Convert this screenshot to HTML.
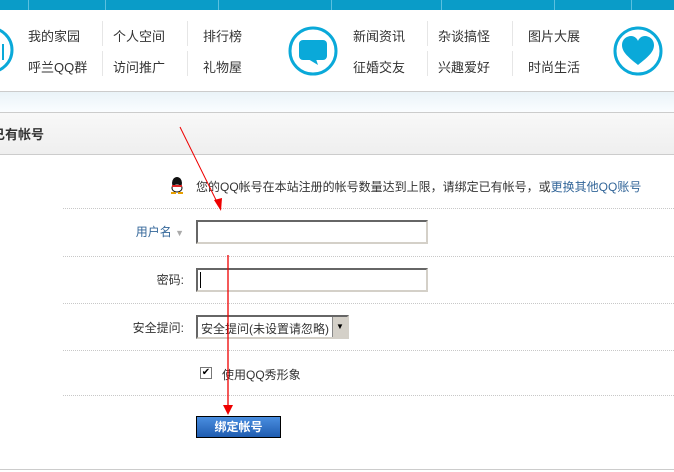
<!DOCTYPE html>
<html><head><meta charset="utf-8"><style>
body{margin:0;width:674px;height:472px;overflow:hidden;background:#fff;font-family:"Liberation Sans","Noto Sans CJK SC",sans-serif;font-size:12px;color:#333;position:relative}
.a{position:absolute}
.top{left:0;top:0;width:674px;height:10px;background:#0a9cc8}
.sep{top:0;width:1px;height:10px;background:#5cc0df}
.nav{font-size:13px;color:#333}
.vl{width:1px;height:25px;background:#e6e6e6}
.dot{left:63px;width:611px;border-top:1px dotted #c8c8c8;height:0}
.lbl{width:120px;text-align:right;left:64px}
.inp{left:196px;width:228px;height:20px;border:2px solid;border-color:#666 #d4d0c8 #d4d0c8 #666;background:#fff}
</style></head><body>
<div class="a top"></div>
<div class="a sep" style="left:28px"></div><div class="a sep" style="left:105px"></div><div class="a sep" style="left:218px"></div><div class="a sep" style="left:331px"></div><div class="a sep" style="left:441px"></div><div class="a sep" style="left:554px"></div><div class="a sep" style="left:631px"></div>
<svg class="a" style="left:0;top:10px" width="674" height="82">
<circle cx="-10" cy="40" r="22" fill="none" stroke="#0aa9d9" stroke-width="3"/>
<path d="M3 34 L3 50" stroke="#0aa9d9" stroke-width="2"/>
<circle cx="313" cy="41" r="23" fill="none" stroke="#0aa9d9" stroke-width="3"/>
<rect x="299" y="30" width="28" height="20" rx="4" fill="#0aa9d9"/><path d="M308 49 L318 55 L316 49Z" fill="#0aa9d9"/>
<circle cx="638" cy="41" r="23" fill="none" stroke="#0aa9d9" stroke-width="3"/>
<path d="M638 55 C628 47 622 42 622 35 C622 29 627 26 631 26 C634 26 637 28 638 31 C639 28 642 26 645 26 C649 26 654 29 654 35 C654 42 648 47 638 55Z" fill="#0aa9d9"/>
</svg>
<div class="a nav" style="left:28px;top:26px">我的家园</div><div class="a nav" style="left:28px;top:57px">呼兰QQ群</div>
<div class="a vl" style="left:102px;top:21px"></div><div class="a vl" style="left:102px;top:51px"></div>
<div class="a nav" style="left:113px;top:26px">个人空间</div><div class="a nav" style="left:113px;top:57px">访问推广</div>
<div class="a vl" style="left:187px;top:21px"></div><div class="a vl" style="left:187px;top:51px"></div>
<div class="a nav" style="left:203px;top:26px">排行榜</div><div class="a nav" style="left:203px;top:57px">礼物屋</div>
<div class="a nav" style="left:353px;top:26px">新闻资讯</div><div class="a nav" style="left:353px;top:57px">征婚交友</div>
<div class="a vl" style="left:427px;top:21px"></div><div class="a vl" style="left:427px;top:51px"></div>
<div class="a nav" style="left:438px;top:26px">杂谈搞怪</div><div class="a nav" style="left:438px;top:57px">兴趣爱好</div>
<div class="a vl" style="left:512px;top:21px"></div><div class="a vl" style="left:512px;top:51px"></div>
<div class="a nav" style="left:528px;top:26px">图片大展</div><div class="a nav" style="left:528px;top:57px">时尚生活</div>
<div class="a" style="left:0;top:91px;width:674px;height:1px;background:#ccc"></div>
<div class="a" style="left:0;top:92px;width:674px;height:20px;background:linear-gradient(#eaf3f8,#fafdff)"></div>
<div class="a" style="left:0;top:112px;width:674px;height:41px;background:linear-gradient(#f8f8f8,#efefef);border-top:1px solid #ccc;border-bottom:1px solid #ccc"></div>
<div class="a" style="left:-8px;top:124px;font-size:13px;font-weight:bold;color:#333">已有帐号</div>
<svg class="a" style="left:168px;top:176px" width="18" height="18"><ellipse cx="9" cy="7" rx="5" ry="6" fill="#111"/><ellipse cx="9" cy="12" rx="5" ry="4" fill="#fff" stroke="#111"/><rect x="4" y="9" width="10" height="2" fill="#d22"/><path d="M3 17h5M10 17h5" stroke="#e8a000" stroke-width="2"/></svg>
<div class="a" style="left:196px;top:178px">您的QQ帐号在本站注册的帐号数量达到上限，请绑定已有帐号，或<span style="color:#336699">更换其他QQ账号</span></div>
<div class="a dot" style="top:208px"></div><div class="a dot" style="top:256px"></div><div class="a dot" style="top:303px"></div><div class="a dot" style="top:350px"></div><div class="a dot" style="top:395px"></div>
<div class="a lbl" style="top:223px;color:#336699">用户名 <span style="color:#aaa;font-size:9px">▼</span></div>
<div class="a inp" style="top:220px"></div>
<div class="a lbl" style="top:271px">密码:</div>
<div class="a inp" style="top:268px"></div><div class="a" style="left:200px;top:272px;width:1px;height:16px;background:#000"></div>
<div class="a lbl" style="top:319px">安全提问:</div>
<div class="a" style="left:196px;top:315px;width:149px;height:20px;border:2px solid;border-color:#666 #d4d0c8 #d4d0c8 #666;background:#fff"><span style="position:absolute;left:3px;top:3px">安全提问(未设置请忽略)</span><div style="position:absolute;right:0;top:0;width:14px;height:20px;background:#d4d0c8;border-left:1px solid #888;text-align:center;font-size:8px;line-height:20px;color:#000">▼</div></div>
<div class="a" style="left:200px;top:367px;width:10px;height:10px;border:1px solid #777;background:#fff;font-size:10px;line-height:10px;text-align:center;color:#000">✔</div>
<div class="a" style="left:222px;top:366px">使用QQ秀形象</div>
<div class="a" style="left:196px;top:416px;width:83px;height:20px;border:1px solid #000;background:linear-gradient(#4a8ee0,#1f5cb0);color:#fff;font-weight:bold;text-align:center;line-height:20px">绑定帐号</div>
<div class="a" style="left:0;top:469px;width:674px;height:1px;background:#ccc"></div>
<svg class="a" style="left:0;top:0" width="674" height="472"><path d="M180 127 L217 202" stroke="#e00" stroke-width="1"/><path d="M214 200 L221 211 L222 198Z" fill="#e00"/><path d="M228 255 L228 408" stroke="#e00" stroke-width="1.3"/><path d="M223 405 L233 405 L228 415Z" fill="#e00"/></svg>
</body></html>
